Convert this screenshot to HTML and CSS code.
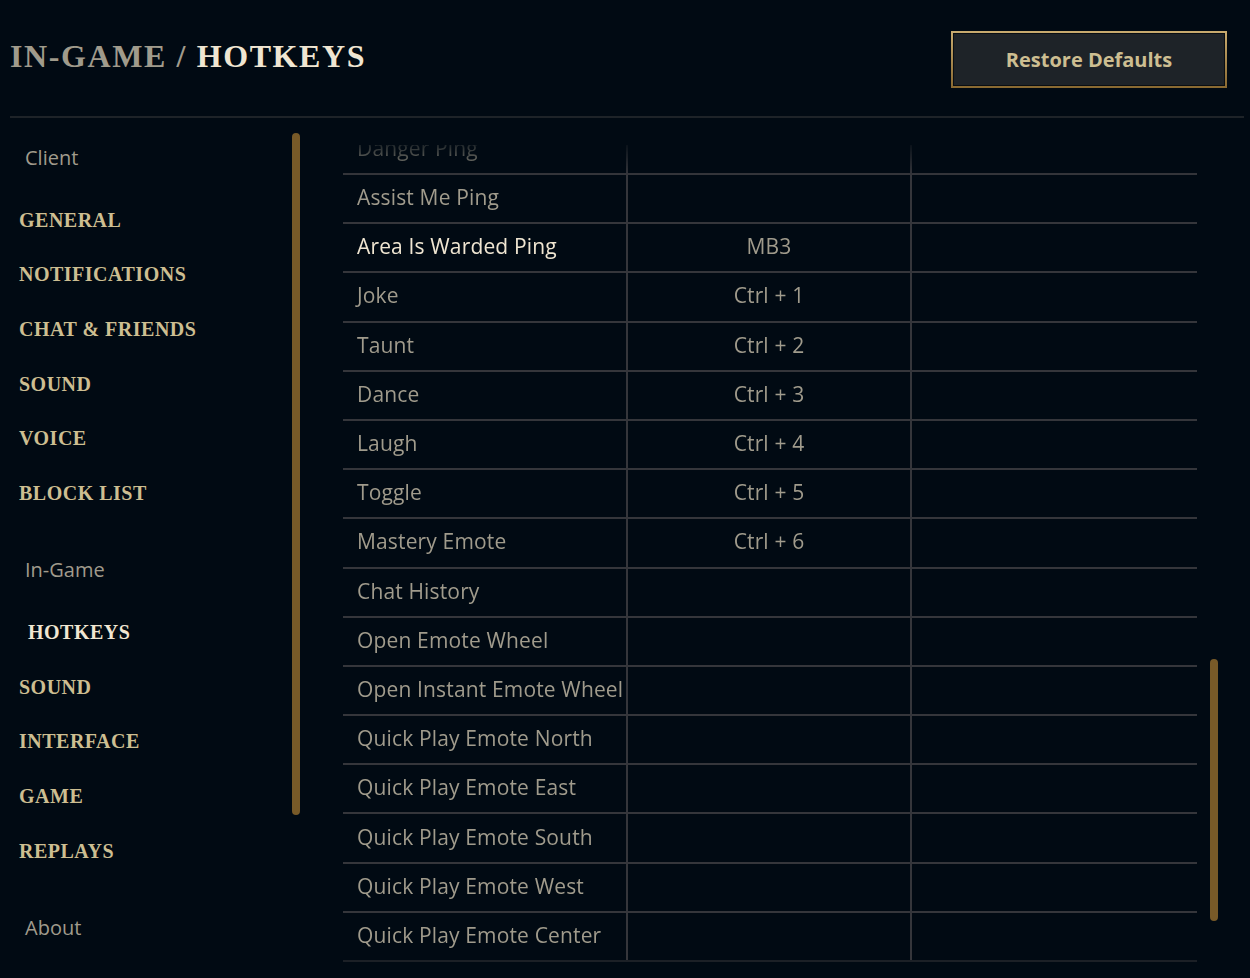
FILE: index.html
```html
<!DOCTYPE html>
<html>
<head>
<meta charset="utf-8">
<link rel="stylesheet" href="styles.css">
</head>
<body>
<header class="header">
  <h1 class="title"><span class="title-dim">IN-GAME</span> <span class="title-dim">/</span> <span class="title-lit">HOTKEYS</span></h1>
  <button class="restore">Restore Defaults</button>
</header>
<main class="main">
  <aside class="sidebar">
    <nav class="nav">
      <div class="group">
        <div class="group-label">Client</div>
        <div class="item">GENERAL</div>
        <div class="item">NOTIFICATIONS</div>
        <div class="item">CHAT &amp; FRIENDS</div>
        <div class="item">SOUND</div>
        <div class="item">VOICE</div>
        <div class="item">BLOCK LIST</div>
      </div>
      <div class="group">
        <div class="group-label">In-Game</div>
        <div class="item item-active">HOTKEYS</div>
        <div class="item">SOUND</div>
        <div class="item">INTERFACE</div>
        <div class="item">GAME</div>
        <div class="item">REPLAYS</div>
      </div>
      <div class="group">
        <div class="group-label">About</div>
      </div>
    </nav>
    <div class="track track-nav"><div class="thumb thumb-nav"></div></div>
  </aside>
  <section class="content">
    <div class="viewport">
      <div class="rows">
        <div class="row"><div class="cell cell-name">Danger Ping</div><div class="cell cell-key"></div><div class="cell cell-alt"></div></div>
        <div class="row"><div class="cell cell-name">Assist Me Ping</div><div class="cell cell-key"></div><div class="cell cell-alt"></div></div>
        <div class="row row-hover"><div class="cell cell-name">Area Is Warded Ping</div><div class="cell cell-key">MB3</div><div class="cell cell-alt"></div></div>
        <div class="row"><div class="cell cell-name">Joke</div><div class="cell cell-key">Ctrl + 1</div><div class="cell cell-alt"></div></div>
        <div class="row"><div class="cell cell-name">Taunt</div><div class="cell cell-key">Ctrl + 2</div><div class="cell cell-alt"></div></div>
        <div class="row"><div class="cell cell-name">Dance</div><div class="cell cell-key">Ctrl + 3</div><div class="cell cell-alt"></div></div>
        <div class="row"><div class="cell cell-name">Laugh</div><div class="cell cell-key">Ctrl + 4</div><div class="cell cell-alt"></div></div>
        <div class="row"><div class="cell cell-name">Toggle</div><div class="cell cell-key">Ctrl + 5</div><div class="cell cell-alt"></div></div>
        <div class="row"><div class="cell cell-name">Mastery Emote</div><div class="cell cell-key">Ctrl + 6</div><div class="cell cell-alt"></div></div>
        <div class="row"><div class="cell cell-name">Chat History</div><div class="cell cell-key"></div><div class="cell cell-alt"></div></div>
        <div class="row"><div class="cell cell-name">Open Emote Wheel</div><div class="cell cell-key"></div><div class="cell cell-alt"></div></div>
        <div class="row"><div class="cell cell-name">Open Instant Emote Wheel</div><div class="cell cell-key"></div><div class="cell cell-alt"></div></div>
        <div class="row"><div class="cell cell-name">Quick Play Emote North</div><div class="cell cell-key"></div><div class="cell cell-alt"></div></div>
        <div class="row"><div class="cell cell-name">Quick Play Emote East</div><div class="cell cell-key"></div><div class="cell cell-alt"></div></div>
        <div class="row"><div class="cell cell-name">Quick Play Emote South</div><div class="cell cell-key"></div><div class="cell cell-alt"></div></div>
        <div class="row"><div class="cell cell-name">Quick Play Emote West</div><div class="cell cell-key"></div><div class="cell cell-alt"></div></div>
        <div class="row row-last"><div class="cell cell-name">Quick Play Emote Center</div><div class="cell cell-key"></div><div class="cell cell-alt"></div></div>
      </div>
    </div>
    <div class="track track-content"><div class="thumb thumb-content"></div></div>
  </section>
</main>
</body>
</html>
```
FILE: styles.css
```css
* { box-sizing: border-box; }
html, body {
  margin: 0;
  padding: 0;
  background: #010a13;
  width: 1250px;
  height: 978px;
  overflow: hidden;
}
body {
  font-family: "Open Sans", "Noto Sans", sans-serif;
  color: #a09b8c;
}
.header {
  margin: 0 6px 0 10px;
  height: 118px;
  border-bottom: 2px solid #1e2328;
  display: flex;
  justify-content: space-between;
  align-items: flex-start;
}
.title {
  margin: 36px 0 0 0;
  font-family: "Liberation Serif", serif;
  font-weight: bold;
  font-size: 32px;
  line-height: 40px;
  letter-spacing: 1.6px;
}
.title-dim { color: #a09b8c; }
.title-lit { color: #f0e6d2; }
.restore {
  margin: 31px 17px 0 0;
  width: 276px;
  height: 57px;
  background: #1e2328;
  border: 2px solid #c8aa6e;
  border-image: linear-gradient(to bottom, #c8aa6e, #8a6a32) 1;
  box-shadow: inset 0 0 0 1px #0a0e12;
  color: #cdbe91;
  font-family: "Open Sans", sans-serif;
  font-weight: 700;
  font-size: 20px;
  padding: 0;
}
.main {
  display: flex;
  height: 860px;
}
.sidebar {
  display: flex;
  width: 300px;
}
.nav {
  width: 292px;
  padding: 20px 0 0 19px;
}
.group + .group { margin-top: 29.5px; }
.group-label {
  height: 40px;
  line-height: 40px;
  padding-left: 6px;
  font-size: 20px;
  color: #a09b8c;
  margin-bottom: 14.65px;
}
.item {
  height: 54.7px;
  line-height: 54.7px;
  font-family: "Liberation Serif", serif;
  font-weight: bold;
  font-size: 20px;
  letter-spacing: 0.5px;
  color: #cdbe91;
}
.item-active {
  color: #f0e6d2;
  padding-left: 9px;
}
.track { width: 8px; }
.thumb {
  width: 8px;
  background: #785a28;
  border-radius: 4px;
}
.thumb-nav {
  margin-top: 15px;
  height: 682px;
}
.content {
  display: flex;
  margin-left: 43px;
  gap: 13px;
}
.viewport {
  width: 854px;
  margin-top: 27px;
  height: 833px;
  overflow: hidden;
  -webkit-mask-image: linear-gradient(to bottom, rgba(0,0,0,0.2) 0, #000 30px);
  mask-image: linear-gradient(to bottom, rgba(0,0,0,0.2) 0, #000 30px);
}
.rows { margin-top: -19.2px; }
.row {
  display: grid;
  grid-template-columns: 285px 284px 285px;
  height: 49.19px;
  border-bottom: 2px solid #35363b;
}
.row-last { border-bottom-color: #1c2026; }
.cell {
  display: flex;
  align-items: center;
  padding-bottom: 3px;
  font-size: 21px;
  letter-spacing: 0.15px;
  color: #a09b8c;
  white-space: nowrap;
}
.cell-name {
  padding-left: 14px;
  border-right: 2px solid #35363b;
}
.cell-key {
  justify-content: center;
  border-right: 2px solid #35363b;
}
.row-hover .cell-name { color: #f0e6d2; }
.thumb-content {
  margin-top: 541px;
  height: 262px;
}
```
